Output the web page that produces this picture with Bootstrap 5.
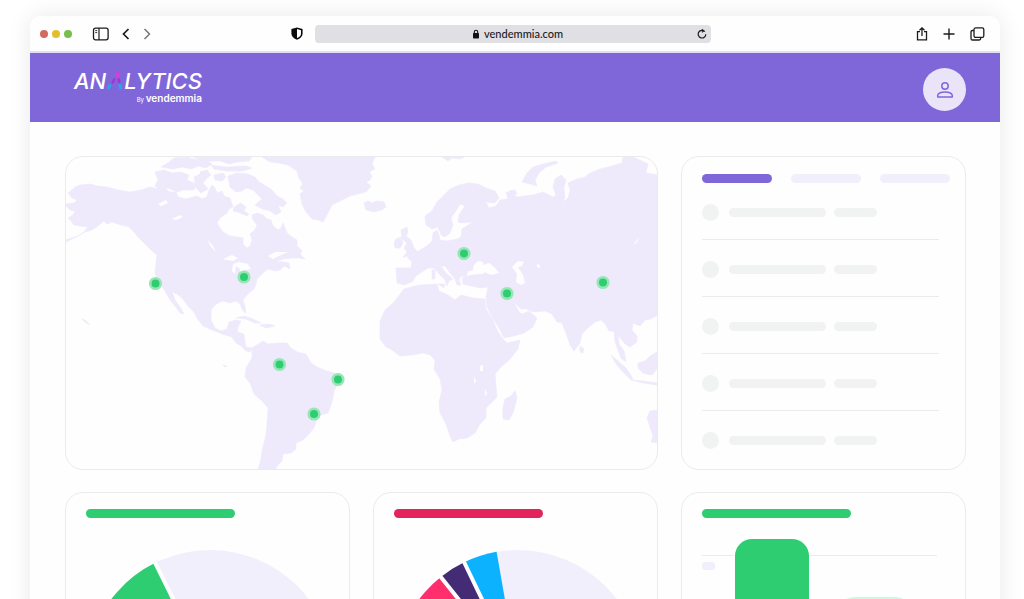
<!DOCTYPE html>
<html lang="en">
<head>
<meta charset="utf-8">
<meta name="viewport" content="width=device-width, initial-scale=1">
<title>Analytics by vendemmia</title>
<link href="https://cdn.jsdelivr.net/npm/bootstrap@5.3.0/dist/css/bootstrap.min.css" rel="stylesheet">
<style>
  :root { --violet: #7f67da; --mist: #f1effb; --grey: #f1f2f2; --line: #ebebed; --green: #2fcd71; --red: #e2235c; }
  body { font-family: Inter, "Open Sans", sans-serif; background: #fff; }
  svg { display: block; }
  .browser { margin: 16px 24px 0 30px; border-radius: 10px 10px 0 0; background: #fefefe; box-shadow: 0 0 24px rgba(0,0,0,.09); min-height: 100vh; }
  .toolbar { height: 37px; padding-right: 4px; border-bottom: 2px solid #e4def8; }
  .side { flex: 1 1 0; }
  .lights { margin-left: 10px; }
  .shield { margin: 0 12px 0 auto; }
  .actions { gap: 15px; margin-right: 11px; }
  .dot { width: 8px; height: 8px; }
  .dot-close { background: #d3695f; }
  .dot-min { background: #e5bd2c; }
  .dot-max { background: #76bf4c; }
  .tool { padding: 0; border: 0; background: none; color: #1c1c1c; }
  .forward { margin-left: 13px; color: #77777c; }
  .address { width: 41%; height: 18px; padding: 0 4px 0 36px; border-radius: 4px; background: #e0dfe4; }
  .address input { width: 92px; padding: 0; border: 0; background: none; color: #1b1b1f; font-family: Lato, Inter, sans-serif; font-size: 11px; line-height: 18px; font-weight: 500; outline: 0; }
  .brandbar { height: 69px; padding: 15px 34px 0 44px; background: var(--violet); }
  .brand { color: #fff; text-decoration: none; }
  .brand-name { font-size: 22px; line-height: 26px; font-weight: 500; font-style: italic; }
  .brand-by { font-size: 6px; line-height: 8px; }
  .brand-by b { font-size: 10px; font-weight: 600; }
  .avatar { width: 43px; height: 43px; background: #e9e4f8; color: var(--violet); }
  .board { padding: 34px 34px 0 35px; }
  .board .row { --bs-gutter-x: 23px; }
  .lower > div { padding-top: 22px; }
  .panel { height: 100%; border: 1px solid var(--line); border-radius: 18px; background: #fefefe; overflow: hidden; }
  .feed { padding: 17px 15px 0 20px; }
  .feed-tabs { gap: 19px; }
  .feed-list { margin-right: 11px; }
  .feed-item { height: 57px; padding: 21px 0 18px; border-bottom: 1px solid var(--line); }
  .feed-item:last-child { border-color: transparent; }
  .bone { height: 9px; border-radius: 5px; background: var(--grey); }
  .bone-avatar { width: 17px; height: 17px; margin-right: 10px; background: var(--grey); }
  .bone-long { width: 97px; }
  .bone-short { width: 43px; }
  .bone-tab { flex: 1; background: var(--mist); }
  .bone-tab.active { background: var(--violet); }
  .bone-title { width: 149px; background: var(--green); }
  .bone-title.is-red { background: var(--red); }
  .chart-card { padding: 16px 15px 20px 20px; }
  .pie { width: 248px; margin-top: 32px; }
  .bars { width: 248px; margin-top: 21px; }
</style>
</head>
<body class="vh-100 overflow-hidden">
<div class="browser">
  <div class="toolbar d-flex align-items-center">
    <div class="side d-flex align-items-center">
      <div class="lights d-flex gap-1">
        <span class="dot dot-close rounded-circle"></span>
        <span class="dot dot-min rounded-circle"></span>
        <span class="dot dot-max rounded-circle"></span>
      </div>
      <button class="tool ms-3" type="button" aria-label="Sidebar"><svg class="ms-1" width="18" height="14" viewBox="0 0 18 14" fill="none" stroke="currentColor"><rect x="1.500" y="1.200" width="14.600" height="11.600" rx="2" stroke-width="1.300"/><path d="M7 1v12" stroke-width="1.200"/><path d="M3.200 3.600h2M3.200 5.600h2" stroke-width=".9"/></svg></button>
      <button class="tool ms-2" type="button" aria-label="Back"><svg class="ms-1" width="8" height="12" viewBox="0 0 8 12" fill="none" stroke="currentColor" stroke-width="1.700"><path d="M6.500 1 1.500 6l5 5"/></svg></button>
      <button class="tool forward" type="button" aria-label="Forward"><svg width="8" height="12" viewBox="0 0 8 12" fill="none" stroke="currentColor" stroke-width="1.500"><path d="m1.500 1 5 5-5 5"/></svg></button>
      <button class="tool shield" type="button" aria-label="Privacy report"><svg width="12" height="13" viewBox="0 0 12 13"><path d="M6 .4 11.600 2v4.400c0 3-2.300 5.200-5.600 6.300C2.700 11.600.4 9.400.4 6.400V2z" fill="#0b0b0b"/><path d="M6 2.100 10 3.200v3.200c0 2-1.400 3.600-4 4.700z" fill="#fff"/></svg></button>
    </div>
    <div class="address d-flex align-items-center">
      <label for="url" class="ms-auto me-1" aria-label="Address"><svg width="8" height="10" viewBox="0 0 8 10"><rect x="1" y="4" width="6" height="5.500" rx=".8" fill="#111"/><path d="M2.300 4.500V3a1.700 1.700 0 0 1 3.400 0v1.500" fill="none" stroke="#111" stroke-width="1.100"/></svg></label>
      <input id="url" type="text" value="vendemmia.com" aria-label="Address">
      <button class="tool ms-auto" type="button" aria-label="Reload"><svg width="10" height="10" viewBox="0 0 10 10" fill="none" stroke="currentColor" stroke-width="1.200"><path d="M7.800 2.600A3.800 3.800 0 1 0 8.800 5.200M5 .3l1.600 1.500L5 3.300"/></svg></button>
    </div>
    <div class="side d-flex justify-content-end">
      <div class="actions d-flex align-items-center">
        <button class="tool" type="button" aria-label="Share"><svg width="12" height="14" viewBox="0 0 12 14" fill="none" stroke="currentColor" stroke-width="1.300"><path d="M4 4.700H1.500v8.200h9V4.700H8M6 9V1M3.500 3.300 6 .9l2.500 2.400"/></svg></button>
        <button class="tool" type="button" aria-label="New tab"><svg width="12" height="12" viewBox="0 0 12 12" stroke="currentColor" stroke-width="1.400"><path d="M6 .5v11M.5 6h11"/></svg></button>
        <button class="tool" type="button" aria-label="Show tabs"><svg width="15" height="14" viewBox="0 0 15 14" fill="none" stroke="currentColor" stroke-width="1.300"><rect x="4" y=".9" width="9.800" height="9.500" rx="1.600"/><path d="M3.800 3.500H2.400c-.8 0-1.400.5-1.400 1.300v6.600c0 .9.600 1.600 1.500 1.600h6.700c.9 0 1.500-.6 1.500-1.400v-1"/></svg></button>
      </div>
    </div>
  </div>

  <header class="brandbar d-flex align-items-start justify-content-between">
    <a class="brand d-inline-block" href="#" aria-label="Analytics by vendemmia">
      <div class="brand-name d-flex align-items-center"><span>AN</span><svg width="18" height="18" viewBox="0 0 18 18" fill="none" stroke-linecap="round"><circle cx="11.500" cy="2.600" r="2.600" fill="#d53fd6"/><path d="m8.200 7.500-1.500 2.800M12.700 7.500l.6 2.500" stroke="#9d35d8" stroke-width="2.600"/><path d="M3.800 13.500 2.500 16M14 13.500l.5 2.500" stroke="#27a6ee" stroke-width="3"/></svg><span>LYTICS</span></div>
      <div class="brand-by text-end">By <b>vendemmia</b></div>
    </a>
    <button class="tool avatar rounded-circle d-flex align-items-center justify-content-center" type="button" aria-label="Account"><svg width="18" height="18" viewBox="0 0 18 18" fill="none" stroke="currentColor" stroke-width="1.500"><circle cx="9" cy="5" r="3.200"/><path d="M1.700 16.100v-1.600c0-2.400 4.200-3.600 7.300-3.600s7.300 1.200 7.300 3.600v1.600z" stroke-linejoin="round"/></svg></button>
  </header>

  <main class="board">
    <div class="row">
      <div class="col-8">
        <div class="panel">
          <svg width="100%" height="100%" viewBox="66 157 591 312" preserveAspectRatio="xMidYMid slice" role="img" aria-label="World map with office locations">
            <g fill="#eeeafb" stroke="#eeeafb" stroke-width=".6" stroke-linejoin="round">
              <!-- North and Central America -->
              <path d="M68 193 72 190 75 187 80 185 90 184 98 186 107 187 118 190 130 192 141 190 150 187 158 189 163 187 170 192 176 192 178 197 186 199 197 196 202 199 207 197 209 190 212 185 215 188 217 193 222 191 224 196 230 198 233 207 229 209 227 213 220 218 217 223 220 228 223 232 230 236 237 237 243 238 243 244 247 248 250 246 252 240 250 234 255 230 257 225 253 220 252 215 257 213 263 215 267 219 271 220 273 226 278 230 281 228 283 223 287 233 292 237 297 240 297 246 302 251 300 254 292 258 283 259 276 262 284 262 289 263 290 269 284 266 280 270 275 271 268 269 262 274 257 279 256 284 254 289 248 294 245 297 243 301 245 306 246 313 243 311 240 304 236 301 230 303 222 301 215 305 211 310 211 320 215 328 221 331 227 329 229 322 236 320 241 321 238 327 237 332 244 334 245 342 246 347 252 348 250 352 246 351 241 346 236 343 232 337 222 334 212 330 203 326 197 318 194 312 188 306 182 298 177 294 172 292 175 300 180 307 184 314 180 313 175 306 170 300 166 293 163 288 158 282 155 273 156 263 157 255 152 251 147 246 142 241 138 237 134 232 129 227 121 225 112 222 107 224 104 221 98 226 92 230 85 232 78 236 68 241 65 243 65 240 78 236 84 232 88 227 80 226 74 225 71 221 68 218 73 215 75 211 70 210 66 206 66 204 74 203 77 200 72 198z"/>
              <!-- Canadian Arctic -->
              <path d="M155 172 164 170 172 173 181 172 189 175 187 180 196 184 194 190 183 190 177 192 168 188 161 191 155 186 158 180zM194 177 203 173 207 178 203 183 208 189 201 193 196 188zM174 158 188 157 193 159 207 160 212 164 206 168 198 166 191 169 182 167 173 169 161 167 168 163zM193 157H252L249 161 237 162 229 164 220 161 205 161zM211 165 226 167 246 166 252 168 243 171 226 171 214 169zM200 172 207 170 211 175 206 179 201 177zM214 175 223 173 226 177 222 181 215 180zM228 176 237 173 248 174 255 177 259 182 266 186 272 190 277 196 283 199 287 203 283 207 278 205 281 212 276 215 270 211 262 209 255 205 262 199 257 194 253 190 246 188 242 191 236 192 230 187zM234 207 241 203 246 207 244 211 249 214 247 216 240 213 233 211z"/>
              <!-- Greenland and Iceland -->
              <path d="M262 157H375L372 164 375 169 369 172 372 176 370 180 366 182 371 186 366 192 358 194 350 196 340 201 332 205 328 213 323 222 318 220 312 219 306 212 302 204 300 194 304 191 300 188 303 184 299 178 297 171 288 165 279 163 270 162zM364 203 368 201 372 203 377 201 384 202 386 207 382 210 374 212 366 210z"/>
              <!-- Newfoundland and Caribbean -->
              <path d="M291 258 297 250 299 247 300 254 305 259 298 258zM236 318 244 316 253 319 261 323 255 323 246 319zM260 325 269 324 275 326 266 328zM82 319 85 320 90 325 85 322zM223 365 227 366 225 367z"/>
              <!-- South America -->
              <path d="M252 348 257 345 263 341 268 344 277 343 287 343 291 348 297 352 306 354 311 363 317 367 327 371 335 373 340 378 338 384 334 391 333 398 330 408 328 413 321 415 317 420 314 428 309 434 303 440 296 443 296 449 291 453 283 454 282 461 278 465 275 470H258L261 459 262 451 266 435 267 423 268 408 262 401 254 394 250 383 245 377 246 368 252 358z"/>
              <!-- British Isles -->
              <path d="M401 230 407 227 408 232 406 236 411 240 414 248 418 252 413 255 403 257 407 252 404 248 407 243 402 239zM396 239 401 237 403 243 400 248 395 248 394 243z"/>
              <!-- Europe and Asia -->
              <path d="M396 268 411 268 412 262 407 257 414 255 420 250 427 246 432 241 433 233 437 230 439 235 440 240 447 241 457 239 461 237 462 229 473 222 462 223 458 222 459 215 465 206 460 204 456 211 451 218 453 225 450 233 445 237 441 235 438 227 432 229 426 225 425 216 432 211 437 202 444 195 450 189 459 185 468 183 478 184 486 188 495 191 499 198 495 203 486 202 489 208 496 206 500 200 508 199 506 192 513 193 517 197 533 195 543 192 553 197 556 195 553 187 555 179 561 175 566 180 564 188 565 197 563 202 568 198 570 190 568 183 577 179 585 177 590 173 600 169 612 166 622 163 623 157 633 157 640 160 648 164 646 173 658 175V315L651 319 645 320 640 326 633 323 632 330 637 336 637 342 630 347 625 344 621 339 618 335 619 344 624 351 626 362 621 358 618 350 615 342 614 331 609 331 606 325 601 320 595 322 589 327 582 334 580 343 574 351 570 345 566 333 562 323 557 322 552 314 545 311 533 312 527 309 521 309 514 302 519 312 522 314 529 311 537 318 533 327 524 333 514 336 504 338 499 328 492 317 487 307 486 297 488 287 480 288 471 286 463 284 462 278 472 275 484 274 485 271 478 268 474 270 468 271 466 277 461 276 459 280 461 285 457 285 455 279 450 273 445 266 441 266 446 273 453 279 449 281 447 286 445 280 440 275 434 268 428 268 422 272 416 276 412 282 404 285 397 283z"/>
              <path d="M438 284 445 284 444 288zM432 270 435 270 435 279 432 279z"/>
              <!-- Arctic Russia -->
              <path d="M522 182 527 173 533 167 543 164 556 161 558 163 546 167 539 173 535 180 537 186 530 184zM442 157H464L460 159 452 158 448 161zM509 191 515 190 517 194 510 194z"/>
              <!-- Africa and Madagascar -->
              <path d="M404 289 411 287 420 285 437 284 439 291 448 295 455 300 461 295 473 298 485 299 486 309 493 320 498 332 503 339 507 343 520 340 518 349 510 359 501 367 495 374 496 385 497 397 491 403 486 408 486 418 480 424 475 433 467 438 459 439 453 442 450 436 446 424 440 413 439 402 442 390 440 379 434 369 435 360 430 355 423 353 412 355 400 356 392 350 386 347 380 339 380 321 385 310 394 302zM515 391 517 398 513 413 509 420 503 419 503 408 505 399 511 396z"/>
              <!-- Sri Lanka, Indonesia, Australia -->
              <path d="M580 346 584 349 583 353 580 352zM611 355 618 361 626 368 631 375 633 380 642 381 657 383V385L643 383 631 380 622 371 616 364zM638 363 645 361 650 356 657 352V369L652 375 643 373 638 368zM658 410 650 411 647 418 650 427 653 436 651 442 658 443z"/>
            </g>
            <!-- Inland seas and lakes -->
            <g fill="#fefefe">
              <path d="M472 273 474 265 478 261 483 262 483 265 489 263 492 265 496 269 499 273 491 275 482 271 476 274zM512 267 518 261 524 262 522 266 518 267 523 275 525 283 521 285 516 282 517 274zM537 264 540 265 540 268 537 267zM633 245 640 236 637 242 633 245z"/>
              <path d="M158 204 166 200 168 203 161 206zM172 219 180 215 183 217 176 220zM207 239 213 246 216 252 211 247zM223 259 232 255 238 258 233 261 227 260zM233 264 239 262 248 264 251 269 244 270 241 276 240 269 236 266 235 274 232 271zM480 366 483 365 483 371 480 371zM474 376 476 381 474 384zM485 388 487 394 485 396zM268 256 275 252 288 252 281 255 273 259z"/>
            </g>
            <g fill="#2fcd71" stroke="#98e6b8" stroke-width="2.600">
              <circle cx="155.500" cy="283.500" r="5.300"/><circle cx="244" cy="277" r="5.300"/><circle cx="279.500" cy="364.500" r="5.300"/><circle cx="338" cy="379.500" r="5.300"/><circle cx="314" cy="414" r="5.300"/><circle cx="464" cy="253.500" r="5.300"/><circle cx="507" cy="293.500" r="5.300"/><circle cx="603" cy="282.500" r="5.300"/>
            </g>
          </svg>
        </div>
      </div>

      <div class="col-4">
        <div class="panel feed">
          <div class="feed-tabs d-flex">
            <div class="bone bone-tab active"></div>
            <div class="bone bone-tab"></div>
            <div class="bone bone-tab"></div>
          </div>
          <ul class="feed-list list-unstyled mb-0">
            <li class="feed-item d-flex align-items-center"><span class="bone-avatar rounded-circle"></span><span class="bone bone-long me-2"></span><span class="bone bone-short"></span></li>
            <li class="feed-item d-flex align-items-center"><span class="bone-avatar rounded-circle"></span><span class="bone bone-long me-2"></span><span class="bone bone-short"></span></li>
            <li class="feed-item d-flex align-items-center"><span class="bone-avatar rounded-circle"></span><span class="bone bone-long me-2"></span><span class="bone bone-short"></span></li>
            <li class="feed-item d-flex align-items-center"><span class="bone-avatar rounded-circle"></span><span class="bone bone-long me-2"></span><span class="bone bone-short"></span></li>
            <li class="feed-item d-flex align-items-center"><span class="bone-avatar rounded-circle"></span><span class="bone bone-long me-2"></span><span class="bone bone-short"></span></li>
          </ul>
        </div>
      </div>
    </div>

    <div class="row lower">
      <div class="col-4">
        <div class="panel chart-card">
          <div class="bone bone-title"></div>
          <svg class="pie" viewBox="0 0 248 248" role="img" aria-label="Share chart">
            <circle cx="124" cy="124" r="124" fill="#f1effb"/>
            <path d="M124 124 68.300 11A126 126 0 0 0 15 187z" fill="#2fcd71" stroke="#fefefe" stroke-width="4"/>
          </svg>
        </div>
      </div>
      <div class="col-4">
        <div class="panel chart-card">
          <div class="bone bone-title is-red"></div>
          <svg class="pie" viewBox="0 0 248 248" role="img" aria-label="Category chart">
            <circle cx="124" cy="124" r="124" fill="#f1effb"/>
            <path d="M124 124 102.600 1.800A124 124 0 0 0 70.200 12.300z" fill="#0db2ff"/>
            <path d="M124 124 70.200 12.300A124 124 0 0 0 46.800 27z" fill="#432c75"/>
            <path d="M124 124 46.800 27A124 124 0 0 0 16.700 186z" fill="#ff2f6d"/>
            <path d="M124 124 69.300 10.500M124 124 45.600 25.400" stroke="#fefefe" stroke-width="4"/>
          </svg>
        </div>
      </div>
      <div class="col-4">
        <div class="panel chart-card">
          <div class="bone bone-title"></div>
          <svg class="bars" viewBox="0 0 248 248" role="img" aria-label="Bar chart">
            <path d="M0 16.500h235" stroke="#ebebed"/>
            <rect x="0" y="23" width="13" height="8" rx="3" fill="#f1effb"/>
            <rect x="32" y="-1" width="76" height="250" rx="18" fill="#fefefe"/>
            <rect x="33" y="0" width="74" height="248" rx="17" fill="#2fcd71"/>
            <rect x="136" y="58" width="74" height="190" rx="17" fill="#d5f5e3"/>
          </svg>
        </div>
      </div>
    </div>
  </main>
</div>
<script src="https://cdn.jsdelivr.net/npm/bootstrap@5.3.0/dist/js/bootstrap.bundle.min.js"></script>
</body>
</html>
